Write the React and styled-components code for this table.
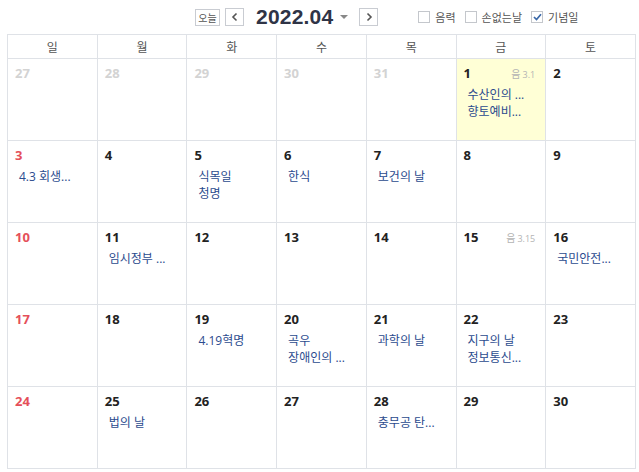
import React from 'react'
import styled, { createGlobalStyle } from 'styled-components'

const GlobalStyle = createGlobalStyle`
  body {
    margin: 0;
    background: #fff;
    font-family: "Open Sans", "Noto Sans CJK KR", sans-serif;
  }
`

const Page = styled.div`
  width: 639px;
  height: 472px;
  overflow: hidden;
`

const Toolbar = styled.div`
  height: 34px;
  display: flex;
  align-items: center;
  padding-left: 195px;
  box-sizing: border-box;
`

const TodayBtn = styled.button`
  width: 25px;
  height: 17px;
  padding: 0;
  border: 1px solid #c9ccd2;
  background: #fff;
  color: #555;
  font-family: "Noto Sans CJK KR", sans-serif;
  font-size: 10px;
  line-height: 15px;
  margin-right: 5px;
`

const ArrowBtn = styled.button`
  width: 19px;
  height: 18px;
  padding: 0;
  border: 1px solid #c9ccd2;
  background: #fff;
  display: flex;
  align-items: center;
  justify-content: center;
  margin-left: ${props => props.$gap || 0}px;
`

const Title = styled.div`
  margin-left: 12px;
  font-family: "Liberation Sans", Arial, sans-serif;
  font-weight: bold;
  font-size: 21px;
  color: #2f3446;
  letter-spacing: 0.2px;
`

const Caret = styled.span`
  margin-left: 7px;
  width: 0;
  height: 0;
  border-left: 4px solid transparent;
  border-right: 4px solid transparent;
  border-top: 4px solid #888;
`

const Options = styled.div`
  display: flex;
  align-items: center;
  margin-left: 40px;
  gap: 9px;
`

const Option = styled.label`
  display: flex;
  align-items: center;
  gap: 5px;
  font-family: "Noto Sans CJK KR", sans-serif;
  font-size: 11px;
  color: #555;
`

const Box = styled.span`
  width: 10px;
  height: 10px;
  border: 1px solid #c4c7cc;
  background: #fff;
  display: flex;
  align-items: center;
  justify-content: center;
`

const Table = styled.table`
  margin-left: 7px;
  width: 629px;
  table-layout: fixed;
  border-collapse: collapse;
`

const HeadCell = styled.th`
  height: 23px;
  border: 1px solid #dfe2e7;
  font-family: "Noto Sans CJK KR", sans-serif;
  font-weight: normal;
  font-size: 12px;
  color: #555;
  padding: 0;
  line-height: 22px;
`

const DayCell = styled.td`
  height: 76px;
  border: 1px solid #dfe2e7;
  vertical-align: top;
  padding: 5px 10px 0 7px;
  background: ${props => (props.$today ? '#ffffd6' : '#fff')};
`

const DayTop = styled.div`
  display: flex;
  justify-content: space-between;
  align-items: baseline;
  height: 18px;
`

const DayNum = styled.span`
  font-weight: bold;
  font-size: 13px;
  color: ${props => (props.$muted ? '#d3d3d3' : props.$sun ? '#e5505a' : '#222')};
`

const Lunar = styled.span`
  font-family: "Noto Sans CJK KR", sans-serif;
  font-size: 10px;
  color: #b4b4b4;
  & b {
    font-family: "Open Sans", sans-serif;
    font-weight: normal;
    font-size: 9px;
    margin-left: 2px;
  }
`

const Events = styled.div`
  margin-top: 4px;
  padding-left: 4px;
`

const Event = styled.div`
  font-family: "Open Sans", "Noto Sans CJK KR", sans-serif;
  font-size: 12px;
  line-height: 17px;
  color: #2b4b8e;
  white-space: nowrap;
`

const days = ['일', '월', '화', '수', '목', '금', '토']

const weeks = [
  [
    { n: 27, muted: true }, { n: 28, muted: true }, { n: 29, muted: true },
    { n: 30, muted: true }, { n: 31, muted: true },
    { n: 1, today: true, lunar: '3.1', ev: ['수산인의 ...', '향토예비...'] },
    { n: 2 }
  ],
  [
    { n: 3, ev: ['4.3 회생...'] }, { n: 4 }, { n: 5, ev: ['식목일', '청명'] },
    { n: 6, ev: ['한식'] }, { n: 7, ev: ['보건의 날'] }, { n: 8 }, { n: 9 }
  ],
  [
    { n: 10 }, { n: 11, ev: ['임시정부 ...'] }, { n: 12 }, { n: 13 }, { n: 14 },
    { n: 15, lunar: '3.15' }, { n: 16, ev: ['국민안전...'] }
  ],
  [
    { n: 17 }, { n: 18 }, { n: 19, ev: ['4.19혁명'] }, { n: 20, ev: ['곡우', '장애인의 ...'] },
    { n: 21, ev: ['과학의 날'] }, { n: 22, ev: ['지구의 날', '정보통신...'] }, { n: 23 }
  ],
  [
    { n: 24 }, { n: 25, ev: ['법의 날'] }, { n: 26 }, { n: 27 },
    { n: 28, ev: ['충무공 탄...'] }, { n: 29 }, { n: 30 }
  ]
]

const Chevron = ({ dir }) => (
  <svg width="8" height="10" viewBox="0 0 8 10">
    <path
      d={dir === 'left' ? 'M5.5 1.5 L2 5 L5.5 8.5' : 'M2.5 1.5 L6 5 L2.5 8.5'}
      fill="none"
      stroke="#555"
      strokeWidth="1.6"
    />
  </svg>
)

const Check = () => (
  <svg width="9" height="8" viewBox="0 0 9 8">
    <path d="M1 4 L3.5 6.5 L8 1.2" fill="none" stroke="#3a68a8" strokeWidth="1.7" />
  </svg>
)

export default function App() {
  return (
    <Page>
      <GlobalStyle />
      <Toolbar>
        <TodayBtn>오늘</TodayBtn>
        <ArrowBtn><Chevron dir="left" /></ArrowBtn>
        <Title>2022.04</Title>
        <Caret />
        <ArrowBtn $gap={11}><Chevron dir="right" /></ArrowBtn>
        <Options>
          <Option><Box />음력</Option>
          <Option><Box />손없는날</Option>
          <Option><Box><Check /></Box>기념일</Option>
        </Options>
      </Toolbar>
      <Table>
        <thead>
          <tr>
            {days.map(d => <HeadCell key={d}>{d}</HeadCell>)}
          </tr>
        </thead>
        <tbody>
          {weeks.map((week, wi) => (
            <tr key={wi}>
              {week.map((day, di) => (
                <DayCell key={di} $today={day.today}>
                  <DayTop>
                    <DayNum $muted={day.muted} $sun={di === 0}>{day.n}</DayNum>
                    {day.lunar && <Lunar>음<b>{day.lunar}</b></Lunar>}
                  </DayTop>
                  {day.ev && (
                    <Events>
                      {day.ev.map(e => <Event key={e}>{e}</Event>)}
                    </Events>
                  )}
                </DayCell>
              ))}
            </tr>
          ))}
        </tbody>
      </Table>
    </Page>
  )
}
